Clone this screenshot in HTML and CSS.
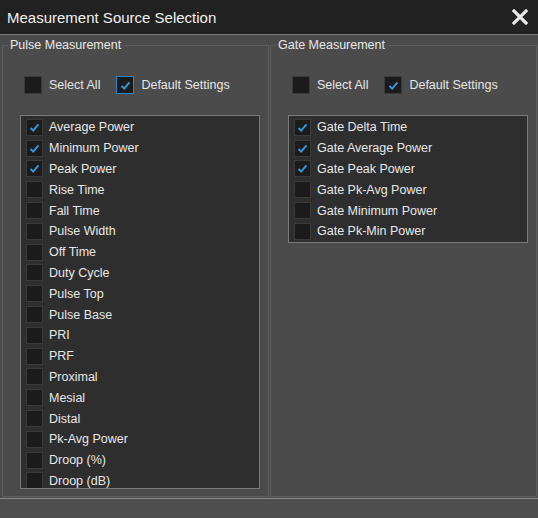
FILE: index.html
```html
<!DOCTYPE html>
<html lang="en">
  <head>
    <meta charset="UTF-8" />
    <title>Measurement Source Selection</title>
    <link rel="stylesheet" href="styles.css">
  </head>
  <body>
    <div class="titlebar">
      <span>Measurement Source Selection</span>
      <svg class="close" width="16" height="16" viewBox="0 0 16 16">
        <path d="M2 2 L14 14 M14 2 L2 14" stroke="#e8e8e8" stroke-width="3.2" stroke-linecap="square" />
      </svg>
    </div>

    <div class="panels">
      <fieldset>
        <legend>Pulse Measurement</legend>
        <div class="inner">
          <div class="opts">
            <label class="opt"><span class="box"></span>Select All</label>
            <label class="opt"><span class="box focus"><svg viewBox="0 0 17 17"><path d="M4 9 L7 12 L13 5" /></svg></span>Default Settings</label>
          </div>
          <div class="list tall">
            <div class="row"><span class="box"><svg viewBox="0 0 17 17"><path d="M4 9 L7 12 L13 5" /></svg></span>Average Power</div>
            <div class="row"><span class="box"><svg viewBox="0 0 17 17"><path d="M4 9 L7 12 L13 5" /></svg></span>Minimum Power</div>
            <div class="row"><span class="box"><svg viewBox="0 0 17 17"><path d="M4 9 L7 12 L13 5" /></svg></span>Peak Power</div>
            <div class="row"><span class="box"></span>Rise Time</div>
            <div class="row"><span class="box"></span>Fall Time</div>
            <div class="row"><span class="box"></span>Pulse Width</div>
            <div class="row"><span class="box"></span>Off Time</div>
            <div class="row"><span class="box"></span>Duty Cycle</div>
            <div class="row"><span class="box"></span>Pulse Top</div>
            <div class="row"><span class="box"></span>Pulse Base</div>
            <div class="row"><span class="box"></span>PRI</div>
            <div class="row"><span class="box"></span>PRF</div>
            <div class="row"><span class="box"></span>Proximal</div>
            <div class="row"><span class="box"></span>Mesial</div>
            <div class="row"><span class="box"></span>Distal</div>
            <div class="row"><span class="box"></span>Pk-Avg Power</div>
            <div class="row"><span class="box"></span>Droop (%)</div>
            <div class="row"><span class="box"></span>Droop (dB)</div>
          </div>
        </div>
      </fieldset>

      <fieldset>
        <legend>Gate Measurement</legend>
        <div class="inner">
          <div class="opts">
            <label class="opt"><span class="box"></span>Select All</label>
            <label class="opt"><span class="box"><svg viewBox="0 0 17 17"><path d="M4 9 L7 12 L13 5" /></svg></span>Default Settings</label>
          </div>
          <div class="list short">
            <div class="row"><span class="box"><svg viewBox="0 0 17 17"><path d="M4 9 L7 12 L13 5" /></svg></span>Gate Delta Time</div>
            <div class="row"><span class="box"><svg viewBox="0 0 17 17"><path d="M4 9 L7 12 L13 5" /></svg></span>Gate Average Power</div>
            <div class="row"><span class="box"><svg viewBox="0 0 17 17"><path d="M4 9 L7 12 L13 5" /></svg></span>Gate Peak Power</div>
            <div class="row"><span class="box"></span>Gate Pk-Avg Power</div>
            <div class="row"><span class="box"></span>Gate Minimum Power</div>
            <div class="row"><span class="box"></span>Gate Pk-Min Power</div>
          </div>
        </div>
      </fieldset>
    </div>

    <div class="footer"></div>
  </body>
</html>
```

FILE: styles.css
```css
* {
  box-sizing: border-box;
}
body {
  margin: 0;
  height: 518px;
  overflow: hidden;
  background-color: #4b4b4b;
  color: #e6e6e6;
  font-family: "Liberation Sans", Arial, sans-serif;
  font-size: 12.5px;
}
.titlebar {
  height: 35px;
  background-color: #212121;
  border-bottom: 1px solid #7b7b7b;
  display: flex;
  align-items: center;
  justify-content: space-between;
  padding: 0 10px 0 7px;
  font-size: 15px;
  color: #f2f2f2;
}
.close {
  display: block;
}
.panels {
  display: flex;
  gap: 1px;
  height: 463px;
  padding: 3px 0 0 2px;
}
fieldset {
  margin: 0;
  padding: 0;
  width: 267px;
  height: 459px;
  min-width: 0;
  border: 1px solid #5d5d5d;
}
legend {
  margin-left: 5px;
  padding: 0 2px;
  line-height: 14px;
  color: #e8e8e8;
}
.inner {
  padding-left: 17px;
}
.opts {
  display: flex;
  align-items: center;
  gap: 16px;
  height: 18px;
  margin: 24px 0 21px 4px;
}
.opt {
  display: flex;
  align-items: center;
  gap: 7px;
}
.opt .box {
  width: 18px;
  height: 18px;
}
.box {
  flex: 0 0 auto;
  width: 17px;
  height: 17px;
  background-color: #1b1b1b;
  border: 1px solid #3a3a3a;
  display: flex;
  align-items: center;
  justify-content: center;
}
.box.focus {
  border-color: #2a86c8;
}
.box svg {
  width: 15px;
  height: 15px;
}
.box path {
  fill: none;
  stroke: #3399db;
  stroke-width: 2.2;
}
.list {
  width: 240px;
  background-color: #2e2e2e;
  border: 1px solid #7a7a7a;
  overflow: hidden;
  padding: 1px 0 0 5px;
}
.tall {
  height: 374px;
}
.short {
  height: 128px;
}
.row {
  height: 20.8px;
  display: flex;
  align-items: center;
  gap: 6px;
  color: #e8e8e8;
}
.footer {
  height: 19px;
  border-top: 1px solid #8a8a8a;
  background-color: #4e4e4e;
}
```
